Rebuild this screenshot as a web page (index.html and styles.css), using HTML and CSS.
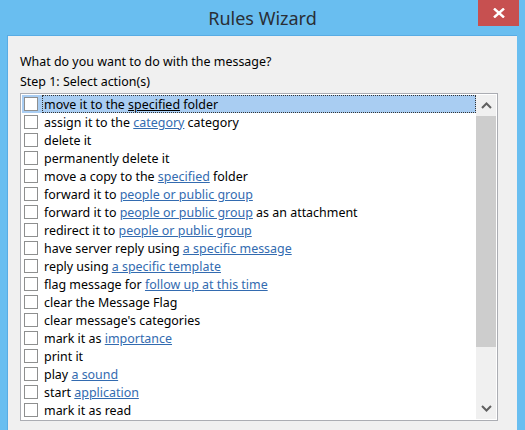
FILE: index.html
```html
<!DOCTYPE html>
<html>
<head>
<meta charset="utf-8">
<link rel="stylesheet" href="styles.css">
</head>
<body>
<div class="window">
  <div class="titlebar">
    <div class="spacer"></div>
    <div class="title">Rules Wizard</div>
    <div class="controls">
      <div class="close">
        <svg width="12" height="10" viewBox="0 0 12 10"><path d="M1 0.5 L11 9.5 M11 0.5 L1 9.5" stroke="#fff" stroke-width="2.4"/></svg>
      </div>
    </div>
  </div>
  <div class="dialog">
    <div class="line">What do you want to do with the message?</div>
    <div class="line">Step 1: Select action(s)</div>
    <div class="listbox">
      <div class="rows">
        <div class="row selected"><span class="cb"></span><span class="label">move it to the <u>specified</u> folder</span></div>
        <div class="row"><span class="cb"></span><span class="label">assign it to the <a>category</a> category</span></div>
        <div class="row"><span class="cb"></span><span class="label">delete it</span></div>
        <div class="row"><span class="cb"></span><span class="label">permanently delete it</span></div>
        <div class="row"><span class="cb"></span><span class="label">move a copy to the <a>specified</a> folder</span></div>
        <div class="row"><span class="cb"></span><span class="label">forward it to <a>people or public group</a></span></div>
        <div class="row"><span class="cb"></span><span class="label">forward it to <a>people or public group</a> as an attachment</span></div>
        <div class="row"><span class="cb"></span><span class="label">redirect it to <a>people or public group</a></span></div>
        <div class="row"><span class="cb"></span><span class="label">have server reply using <a>a specific message</a></span></div>
        <div class="row"><span class="cb"></span><span class="label">reply using <a>a specific template</a></span></div>
        <div class="row"><span class="cb"></span><span class="label">flag message for <a>follow up at this time</a></span></div>
        <div class="row"><span class="cb"></span><span class="label">clear the Message Flag</span></div>
        <div class="row"><span class="cb"></span><span class="label">clear message's categories</span></div>
        <div class="row"><span class="cb"></span><span class="label">mark it as <a>importance</a></span></div>
        <div class="row"><span class="cb"></span><span class="label">print it</span></div>
        <div class="row"><span class="cb"></span><span class="label">play <a>a sound</a></span></div>
        <div class="row"><span class="cb"></span><span class="label">start <a>application</a></span></div>
        <div class="row"><span class="cb"></span><span class="label">mark it as read</span></div>
      </div>
      <div class="scrollbar">
        <div class="arrow">
          <svg width="11" height="7" viewBox="0 0 11 7"><path d="M1 6 L5.5 1.5 L10 6" fill="none" stroke="#606060" stroke-width="2"/></svg>
        </div>
        <div class="thumb"></div>
        <div class="track"></div>
        <div class="arrow">
          <svg width="11" height="7" viewBox="0 0 11 7"><path d="M1 1 L5.5 5.5 L10 1" fill="none" stroke="#606060" stroke-width="2"/></svg>
        </div>
      </div>
    </div>
  </div>
</div>
</body>
</html>
```

FILE: styles.css
```css
html, body {
  margin: 0;
  padding: 0;
  height: 100%;
}
body {
  background: #69bef0;
  font-family: "Noto Sans", "Open Sans", sans-serif;
  font-size: 12.45px;
  color: #000;
  overflow: hidden;
}
.window {
  display: flex;
  flex-direction: column;
  height: 430px;
}
.titlebar {
  height: 35px;
  display: grid;
  grid-template-columns: 1fr auto 1fr;
  align-items: start;
}
.title {
  font-size: 18px;
  color: #2a2f36;
  line-height: 20px;
  padding-top: 8px;
}
.controls {
  display: flex;
  justify-content: flex-end;
  padding-right: 6px;
}
.close {
  width: 41px;
  height: 26px;
  background: #c75050;
  display: flex;
  align-items: center;
  justify-content: center;
}
.dialog {
  margin-left: 7px;
  width: 510px;
  flex: 1;
  background: #f0f0f0;
  border-left: 1px solid #58ace4;
  border-top: 1px solid #58ace4;
  padding: 16px 0 0 12px;
  box-sizing: border-box;
}
.line {
  height: 20px;
  line-height: 20px;
}
.listbox {
  margin-top: 1px;
  width: 478px;
  height: 328px;
  box-sizing: border-box;
  border: 1px solid #abadb3;
  background: #fff;
  padding: 1px;
  display: flex;
}
.rows {
  flex: 1;
  display: flex;
  flex-direction: column;
}
.row {
  height: 18px;
  display: flex;
  align-items: center;
  padding-left: 2px;
}
.row.selected {
  background: #a9cdf2;
}
.cb {
  width: 14px;
  height: 14px;
  box-sizing: border-box;
  border: 1px solid #8e8f8f;
  background: #fff;
  flex: none;
}
.label {
  margin-left: 4px;
  padding: 0 2px;
  height: 18px;
  line-height: 19px;
  box-sizing: border-box;
  white-space: nowrap;
}
.selected .label {
  flex: 1;
  border: 1px dotted #333;
  padding-left: 1px;
  line-height: 17px;
}
.label a {
  color: #336bb0;
  text-decoration: underline;
}
.scrollbar {
  width: 20px;
  background: #f0f0f0;
  display: flex;
  flex-direction: column;
}
.arrow {
  height: 21px;
  display: flex;
  align-items: center;
  justify-content: center;
}
.thumb {
  height: 231px;
  background: #cdcdcd;
}
.track {
  flex: 1;
}
```
